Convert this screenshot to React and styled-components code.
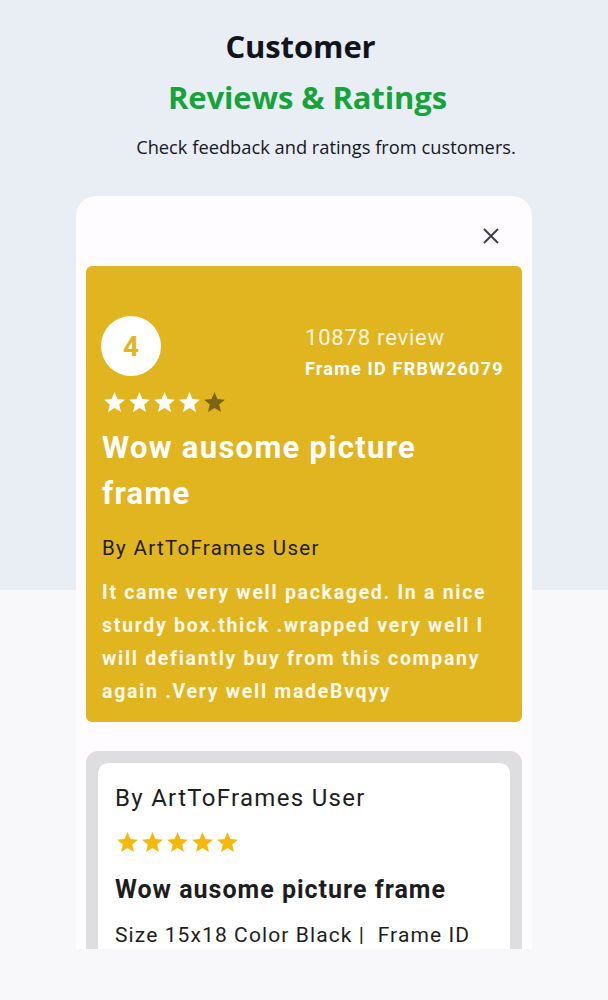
import React from "react";
import styled, { createGlobalStyle } from "styled-components";

const GlobalStyle = createGlobalStyle`
  html, body {
    margin: 0;
    padding: 0;
  }
  body {
    background: linear-gradient(#e9eef5 0, #e9eef5 590px, #f8f8fb 590px, #f8f8fb 100%);
    min-height: 1000px;
    font-family: "Roboto", "Liberation Sans", sans-serif;
  }
`;

const Page = styled.div`
  display: flex;
  flex-direction: column;
  align-items: center;
  min-height: 1000px;
`;

const Hero = styled.div`
  display: flex;
  flex-direction: column;
  align-items: center;
  padding-top: 26px;
  font-family: "Open Sans", "Liberation Sans", sans-serif;
`;

const Heading = styled.h1`
  margin: 0;
  font-size: 31px;
  line-height: 40px;
  font-weight: 700;
  letter-spacing: -0.1px;
  color: #12141c;
  padding-right: 7px;
`;

const Accent = styled.h2`
  margin: 9px 0 0;
  font-size: 31px;
  line-height: 44px;
  font-weight: 700;
  letter-spacing: -0.1px;
  color: #16a33a;
  padding-left: 7px;
`;

const Lead = styled.p`
  margin: 15px 0 0;
  font-size: 18.3px;
  line-height: 26px;
  color: #15171d;
  padding-left: 44px;
`;

const Modal = styled.div`
  margin-top: 36px;
  width: 456px;
  height: 753px;
  box-sizing: border-box;
  padding: 0 10px;
  background: #fefcfe;
  border-radius: 20px 20px 0 0;
  overflow: hidden;
`;

const CloseRow = styled.div`
  display: flex;
  justify-content: flex-end;
  padding: 28px 19px 18px 0;
`;

const CloseButton = styled.button`
  border: none;
  background: none;
  padding: 0;
  width: 24px;
  height: 24px;
  display: flex;
  color: #3f3f44;
  cursor: pointer;
`;

const Featured = styled.div`
  background: #e1b520;
  border-radius: 6px;
  padding: 50px 16px 14px 16px;
  color: #fff;
`;

const TopRow = styled.div`
  display: grid;
  grid-template-columns: 203px 1fr;
`;

const Badge = styled.div`
  width: 60px;
  height: 60px;
  margin-left: -1px;
  border-radius: 50%;
  background: #fff;
  color: #e1b520;
  display: flex;
  align-items: center;
  justify-content: center;
  font-size: 28px;
  font-weight: 700;
`;

const Meta = styled.div`
  display: flex;
  flex-direction: column;
  gap: 4px;
  padding-top: 7px;
`;

const ReviewCount = styled.div`
  font-size: 22px;
  line-height: 30px;
  font-weight: 400;
  letter-spacing: 0.8px;
  color: #fbf4de;
`;

const FrameId = styled.div`
  font-size: 18px;
  line-height: 24px;
  font-weight: 700;
  letter-spacing: 1.2px;
`;

const Stars = styled.div`
  display: flex;
  gap: ${(p) => p.$gap}px;
  margin-top: ${(p) => p.$top}px;
`;

const FeaturedTitle = styled.h3`
  margin: 10px 0 0;
  font-size: 31px;
  line-height: 46px;
  font-weight: 700;
  letter-spacing: 1.3px;
`;

const Author = styled.div`
  color: ${(p) => p.$color};
  font-size: ${(p) => p.$size}px;
  line-height: ${(p) => p.$line}px;
  margin-top: ${(p) => p.$top}px;
  letter-spacing: 1.3px;
`;

const Body = styled.p`
  margin: 13px 0 0;
  font-size: 19.5px;
  line-height: 33px;
  font-weight: 700;
  letter-spacing: 1.7px;
  color: #fdf8ea;
`;

const Tray = styled.div`
  margin-top: 29px;
  background: #dedde0;
  border-radius: 12px;
  padding: 12px 12px 0;
`;

const ReviewCard = styled.div`
  background: #fff;
  border-radius: 10px;
  padding: 19px 17px 40px;
  color: #1d1d21;
`;

const CardTitle = styled.h4`
  margin: 19px 0 0;
  font-size: 25px;
  line-height: 32px;
  font-weight: 700;
  letter-spacing: 1px;
`;

const Details = styled.div`
  margin-top: 15px;
  font-size: 21px;
  line-height: 28px;
  letter-spacing: 1.1px;
  white-space: pre;
`;

function Star({ color, size }) {
  return (
    <svg width={size} height={size} viewBox="0 0 24 24">
      <path
        fill={color}
        d="M12 17.27 18.18 21l-1.64-7.03L22 9.24l-7.19-.61L12 2 9.19 8.63 2 9.24l5.46 4.73L5.82 21z"
      />
    </svg>
  );
}

function StarRow({ rating, on, off, size, gap, top }) {
  return (
    <Stars $gap={gap} $top={top}>
      {[1, 2, 3, 4, 5].map((n) => (
        <Star key={n} size={size} color={n <= rating ? on : off} />
      ))}
    </Stars>
  );
}

export default function App() {
  return (
    <Page>
      <GlobalStyle />
      <Hero>
        <Heading>Customer</Heading>
        <Accent>Reviews &amp; Ratings</Accent>
        <Lead>Check feedback and ratings from customers.</Lead>
      </Hero>

      <Modal>
        <CloseRow>
          <CloseButton aria-label="close">
            <svg width="24" height="24" viewBox="0 0 24 24">
              <path d="M5 5 19 19M19 5 5 19" stroke="currentColor" strokeWidth="2" fill="none" />
            </svg>
          </CloseButton>
        </CloseRow>

        <Featured>
          <TopRow>
            <Badge>4</Badge>
            <Meta>
              <ReviewCount>10878 review</ReviewCount>
              <FrameId>Frame ID FRBW26079</FrameId>
            </Meta>
          </TopRow>
          <StarRow rating={4} on="#ffffff" off="#7d6414" size={25} gap={0} top={9} />
          <FeaturedTitle>Wow ausome picture frame</FeaturedTitle>
          <Author $color="#1f1c14" $size={20.5} $line={30} $top={16}>
            By ArtToFrames User
          </Author>
          <Body>
            It came very well packaged. In a nice sturdy box.thick .wrapped very well I will
            defiantly buy from this company again .Very well madeBvqyy
          </Body>
        </Featured>

        <Tray>
          <ReviewCard>
            <Author $color="#1d1d21" $size={24} $line={32} $top={0}>
              By ArtToFrames User
            </Author>
            <StarRow rating={5} on="#f5b90a" off="#d8d8d8" size={25} gap={0} top={16} />
            <CardTitle>Wow ausome picture frame</CardTitle>
            <Details>Size 15x18 Color Black |  Frame ID</Details>
          </ReviewCard>
        </Tray>
      </Modal>
    </Page>
  );
}
